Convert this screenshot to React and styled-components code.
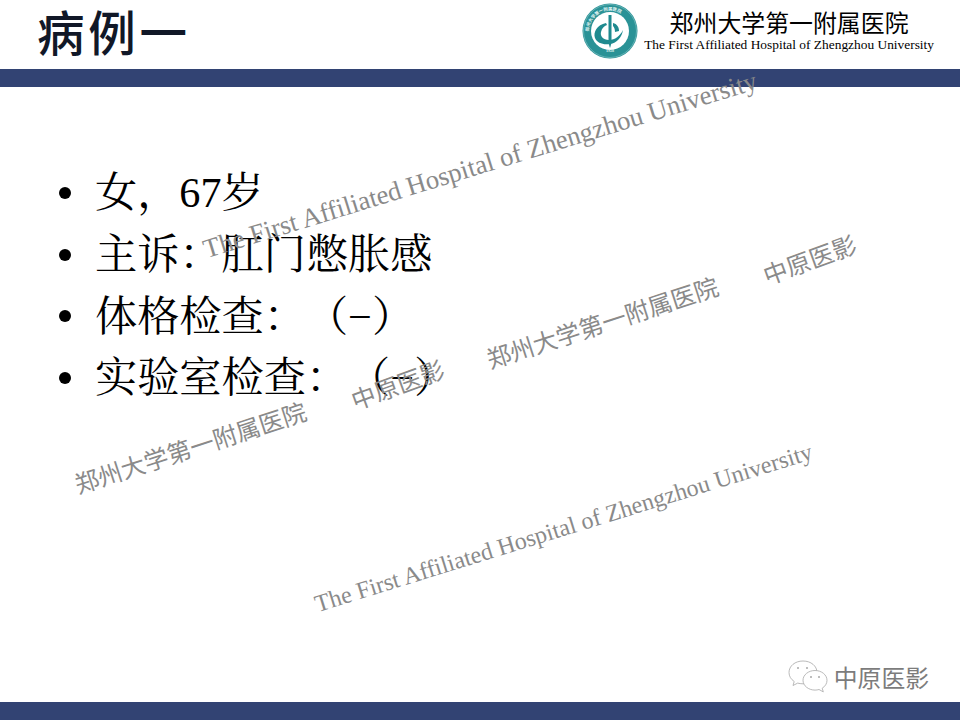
import React from 'react';
import styled, { createGlobalStyle } from 'styled-components';

const SERIF = '"Liberation Serif", "Noto Serif CJK SC", "Noto Sans CJK SC", serif';
const SANS = '"Noto Sans CJK SC", "Liberation Sans", sans-serif';

const GlobalStyle = createGlobalStyle`
  html, body { margin: 0; padding: 0; background: #fff; }
`;

const Slide = styled.div`
  position: relative;
  width: 960px;
  height: 720px;
  overflow: hidden;
  display: flex;
  flex-direction: column;
  background: #fff;
`;

const Header = styled.header`
  height: 69px;
  display: flex;
  justify-content: space-between;
  padding: 0 26px 0 37px;
`;

const Title = styled.h1`
  margin: 0;
  font: 500 47.5px/61px ${SANS};
  letter-spacing: 3.8px;
  color: #111827;
`;

const Brand = styled.div`
  display: flex;
  align-items: flex-start;
  gap: 6px;
`;

const BrandText = styled.div`
  display: flex;
  flex-direction: column;
  align-items: center;
  padding-top: 6px;
`;

const BrandName = styled.div`
  font: 400 23.9px/31px ${SANS};
  color: #000;
  white-space: nowrap;
`;

const BrandSub = styled.div`
  font: 400 13.4px/16px ${SERIF};
  color: #000;
  white-space: nowrap;
`;

const Bar = styled.div`
  height: 18px;
  flex: none;
  background: #324373;
`;

const Content = styled.main`
  flex: 1;
  padding: 75px 0 0 59px;
`;

const List = styled.ul`
  list-style: none;
  margin: 0;
  padding: 0;
`;

const Item = styled.li`
  display: flex;
  align-items: center;
  height: 61.8px;
  font: 400 42.2px/61.8px ${SERIF};
  text-spacing-trim: space-all;
  color: #000;
  white-space: nowrap;

  &::before {
    content: '';
    width: 12px;
    height: 12px;
    border-radius: 50%;
    background: #000;
    margin-right: 24px;
    flex: none;
  }
`;

const Watermark = styled.div`
  position: absolute;
  left: ${p => p.$x}px;
  top: ${p => p.$y}px;
  transform-origin: 0 100%;
  transform: rotate(${p => p.$angle}deg);
  font: 400 ${p => p.$size}px/1 ${p => (p.$latin ? SERIF : SANS)};
  color: #8a8a8a;
  white-space: nowrap;
`;

const Signature = styled.div`
  position: absolute;
  right: 31px;
  bottom: 26px;
  display: flex;
  align-items: center;
  gap: 6px;
`;

const SignatureText = styled.span`
  font: 400 23.8px/32px ${SANS};
  color: #7c7c7c;
`;

function HospitalLogo() {
  return (
    <svg width="56" height="56" viewBox="0 0 56 56" style={{ marginTop: 3 }}>
      <defs>
        <path id="ringTop" d="M7.500 33a21 21 0 1 1 41 0" />
      </defs>
      <circle cx="28" cy="28" r="27.5" fill="#2a9296" />
      <circle cx="28" cy="28" r="26.5" fill="none" stroke="#8cc8ca" strokeWidth="0.6" />
      <circle cx="28" cy="28" r="19" fill="#fff" />
      <text fontFamily="Noto Sans CJK SC, sans-serif" fontSize="4.4" fill="#e4f5f5" fontWeight="700">
        <textPath href="#ringTop" startOffset="6%">郑州大学第一附属医院</textPath>
      </text>
      <path d="M24 20C15 22 11 29 13 35C15 40 21 42 28 41C35 40 40 34 41 27C38 33 33 37 27 37C21 37 18 33 19 29C20 25 22 23 25 22Z" fill="#1f8a8f" />
      <path d="M26.500 12h3v28l-1.500 5-1.500-5z" fill="#1f8a8f" />
      <path d="M31 20C35 21 37 24 37 28L33 29C33 26 32 24 31 23Z" fill="#1f8a8f" />
      <text x="28" y="49" textAnchor="middle" fontFamily="Liberation Serif, serif" fontSize="4" fontWeight="700" fill="#e4f5f5">1928</text>
    </svg>
  );
}

function WechatMark() {
  return (
    <svg width="40" height="34" viewBox="0 0 40 34" fill="#fff" stroke="#a8a8a8" strokeWidth="0.8">
      <path d="M15 1C7 1 1 6 1 12.500c0 3.800 2 6.800 5.200 9L5 25.500l4.700-2.400c1.500.4 3.200.7 5.300.7 7 0 14-5 14-11.300C29 6 23 1 15 1z" />
      <path d="M27 10.500c-6.500 0-12 4.300-12 9.800s5.500 9.800 12 9.800c1.500 0 2.800-.2 4-.6l4.300 2.400-1.100-3.700c3-1.800 4.800-4.700 4.800-7.900 0-5.500-5.500-9.800-12-9.800z" />
      <circle cx="10" cy="8" r="1" fill="#a8a8a8" stroke="none" />
      <circle cx="19" cy="8" r="1" fill="#a8a8a8" stroke="none" />
      <circle cx="23" cy="17" r="1" fill="#a8a8a8" stroke="none" />
      <circle cx="31" cy="17" r="1" fill="#a8a8a8" stroke="none" />
    </svg>
  );
}

const findings = ['女，67岁', '主诉：肛门憋胀感', '体格检查：（−）', '实验室检查：（−）'];

const EN = 'The First Affiliated Hospital of Zhengzhou University';
const CN = '郑州大学第一附属医院';
const marks = [
  { text: EN, x: 208, y: 236, angle: -17.1, size: 26.7, latin: true },
  { text: EN, x: 319, y: 592, angle: -17.2, size: 24, latin: true },
  { text: CN, x: 79, y: 472, angle: -18, size: 24.2 },
  { text: CN, x: 491, y: 347, angle: -18, size: 24.2 },
  { text: '中原医影', x: 356, y: 388, angle: -20, size: 24.3 },
  { text: '中原医影', x: 768, y: 263, angle: -20, size: 24.3 },
];

export default function App() {
  return (
    <Slide>
      <GlobalStyle />
      <Header>
        <Title>病例一</Title>
        <Brand>
          <HospitalLogo />
          <BrandText>
            <BrandName>郑州大学第一附属医院</BrandName>
            <BrandSub>The First Affiliated Hospital of Zhengzhou University</BrandSub>
          </BrandText>
        </Brand>
      </Header>
      <Bar />
      <Content>
        <List>
          {findings.map(f => <Item key={f}>{f}</Item>)}
        </List>
      </Content>
      <Bar />
      {marks.map((m, i) => (
        <Watermark key={i} $x={m.x} $y={m.y} $angle={m.angle} $size={m.size} $latin={m.latin}>
          {m.text}
        </Watermark>
      ))}
      <Signature>
        <WechatMark />
        <SignatureText>中原医影</SignatureText>
      </Signature>
    </Slide>
  );
}
